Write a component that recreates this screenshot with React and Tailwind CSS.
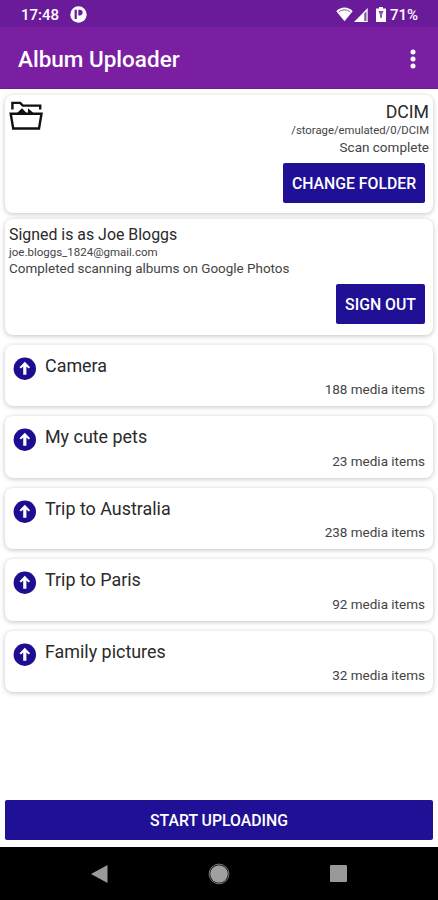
import clsx from 'clsx';

const albums = [
  { id: 1, name: 'Camera', count: 188 },
  { id: 2, name: 'My cute pets', count: 23 },
  { id: 3, name: 'Trip to Australia', count: 238 },
  { id: 4, name: 'Trip to Paris', count: 92 },
  { id: 5, name: 'Family pictures', count: 32 },
];

function StatusBar() {
  return (
    <div className="flex h-[27px] shrink-0 items-center justify-between bg-[#6a1b9a] pt-[2px] pr-[20px] pl-[21px] text-white">
      <div className="flex items-center gap-[11px]">
        <span className="pt-[1px] text-[15px] leading-none font-medium">17:48</span>
        <svg className="h-[17px] w-[17px]" viewBox="0 0 17 17">
          <circle cx="8.5" cy="8.5" r="8.2" fill="#fff" />
          <path d="M4.600 3.800h2.200v9.200H4.600zM8.300 3.800h1.500a2.800 2.800 0 0 1 0 5.600H8.300z" fill="#6a1b9a" />
        </svg>
      </div>
      <div className="flex items-center">
        <svg className="h-[15px] w-[17px]" viewBox="0 0 17 15">
          <path d="M.3 4.2C5-.8 12-.8 16.700 4.200L8.500 14.200z" fill="#fff" />
          <path d="M2.600 5C6 2.200 11 2.200 14.400 5" fill="none" stroke="#8a52b0" strokeWidth="1" />
        </svg>
        <svg className="ml-[1px] h-[14px] w-[14px]" viewBox="0 0 14 14">
          <path d="M13.700 0v14H0z" fill="#fff" />
          <path d="M12.500 3.200v9.800h-2.300V5.600z" fill="#8a52b0" />
        </svg>
        <svg className="ml-[8px] h-[15px] w-[10px]" viewBox="0 0 10 15">
          <path d="M3 0h4v1.500h3V15H0V1.500h3z" fill="#fff" />
          <path d="M2.400 4h5.200L6 7.500v3.200H4V7.500z" fill="#8a52b0" />
        </svg>
        <span className="ml-[4px] pt-[1px] text-[15px] leading-none font-medium">71%</span>
      </div>
    </div>
  );
}

function FolderIcon() {
  return (
    <svg className="h-[29px] w-[34px] shrink-0" viewBox="0 0 34 29" fill="none" stroke="#111" strokeWidth="2.400">
      <path d="M3.400 8.500V1.900h7.800l2.600 2.700h17.400v3.900" />
      <path d="M1.700 12.800h30.800l-2.500 14.700H4.200z" />
      <path d="M7.500 12.500l5.500-5.300 5 5.300zM19 7.200l6 5.300h-6z" fill="#111" stroke="none" />
    </svg>
  );
}

function Card({ className, children }) {
  return (
    <section className={clsx('rounded-[8px] bg-white shadow-[0_1px_5px_rgba(0,0,0,0.24)]', className)}>
      {children}
    </section>
  );
}

function Button({ className, children }) {
  return (
    <button
      className={clsx(
        'flex h-[40px] items-center justify-center rounded-[2px] bg-[#1f1095] pt-[2px] text-[15.800px] font-medium whitespace-nowrap text-white',
        className,
      )}
    >
      {children}
    </button>
  );
}

function AlbumRow({ album }) {
  return (
    <Card className="flex h-[61.400px] gap-[9px] pt-[12px] pr-[8px] pl-[8px]">
      <svg className="h-[23px] w-[23px] shrink-0" viewBox="0 0 23 23">
        <circle cx="11.800" cy="11.700" r="11.200" fill="#1c0d91" />
        <path d="M11.800 4.700l5.300 5.500-1.500 1.400-2.200-2v8.200h-3.200V9.600L8 11.600l-1.500-1.400z" fill="#fff" />
      </svg>
      <div className="flex flex-1 flex-col justify-between pb-[8px]">
        <h2 className="-mt-[1px] text-[17.900px] leading-[20px]">{album.name}</h2>
        <p className="text-right text-[13.500px] leading-[18px] text-[#444]">{album.count} media items</p>
      </div>
    </Card>
  );
}

export default function App() {
  return (
    <div className="flex h-[900px] w-[438px] flex-col overflow-hidden bg-white font-[Roboto,sans-serif] text-[#2a2a2a]">
      <StatusBar />
      <header className="flex h-[62px] shrink-0 items-center justify-between border-b border-[#6a1b8f] bg-[#7b1fa2] pt-[2px] pr-[22px] pl-[18px] text-white">
        <h1 className="pt-[2px] text-[22.500px] font-medium">Album Uploader</h1>
        <svg className="h-[20px] w-[6px]" viewBox="0 0 6 20" fill="#fff">
          <circle cx="3" cy="3" r="2.500" />
          <circle cx="3" cy="10" r="2.500" />
          <circle cx="3" cy="17" r="2.500" />
        </svg>
      </header>

      <main className="flex flex-1 flex-col px-[5px] pt-[6px]">
        <Card className="flex h-[118px] items-start justify-between pt-[6px] pr-[4px] pl-[4px]">
          <FolderIcon />
          <div className="flex flex-col items-end text-[#444]">
            <h2 className="text-[17.700px] leading-[22px] text-[#2a2a2a]">DCIM</h2>
            <p className="text-[11.300px] leading-[15px]">/storage/emulated/0/DCIM</p>
            <p className="text-[13.500px] leading-[18px]">Scan complete</p>
            <Button className="mt-[7px] mr-[4px] w-[142px]">CHANGE FOLDER</Button>
          </div>
        </Card>

        <Card className="mt-[6px] flex h-[116px] flex-col pt-[5px] pr-[8px] pl-[4px] text-[#444]">
          <h2 className="text-[15.900px] leading-[21px] text-[#2a2a2a]">Signed is as Joe Bloggs</h2>
          <p className="text-[11.500px] leading-[15px]">joe.bloggs_1824@gmail.com</p>
          <p className="text-[13.450px] leading-[18px]">Completed scanning albums on Google Photos</p>
          <Button className="mt-[6px] w-[89px] self-end">SIGN OUT</Button>
        </Card>

        <div className="mt-[10px] flex flex-col gap-[10px]">
          {albums.map((album) => (
            <AlbumRow key={album.id} album={album} />
          ))}
        </div>

        <Button className="mt-auto mb-[7px] w-full">START UPLOADING</Button>
      </main>

      {/* Android navigation bar */}
      <nav className="flex h-[53px] shrink-0 items-center justify-between bg-black pr-[91px] pl-[91px]">
        <svg className="h-[20px] w-[17px]" viewBox="0 0 17 20">
          <path d="M0 10L16.500 1v18z" fill="#999" />
        </svg>
        <svg className="h-[22px] w-[22px]" viewBox="0 0 22 22">
          <circle cx="11" cy="11" r="8.800" fill="#a0a0a0" />
          <circle cx="11" cy="11" r="9.900" fill="none" stroke="#777" strokeWidth="1" />
        </svg>
        <div className="h-[17px] w-[17px] rounded-[1px] bg-[#999]" />
      </nav>
    </div>
  );
}
